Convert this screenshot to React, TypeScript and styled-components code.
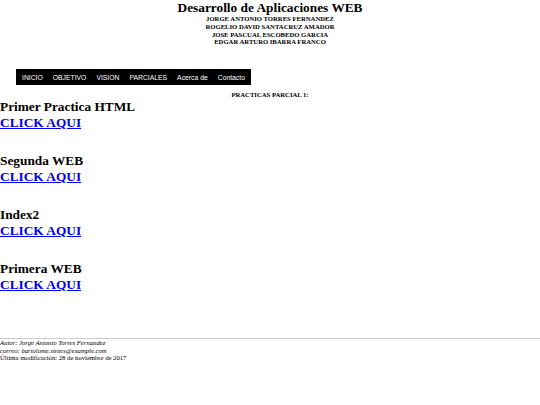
import React from 'react'
import styled, { createGlobalStyle } from 'styled-components'

const GlobalStyle = createGlobalStyle`
    html, body {
        margin: 0;
        padding: 0;
        background: #fff;
    }
    body {
        font-family: "Liberation Serif", "Times New Roman", serif;
        color: #000;
    }
`

const menu: string[] = ['INICIO', 'OBJETIVO', 'VISION', 'PARCIALES', 'Acerca de', 'Contacto']

const authors: string[] = [
    'JORGE ANTONIO TORRES FERNANDEZ',
    'ROGELIO DAVID SANTACRUZ AMADOR',
    'JOSE PASCUAL ESCOBEDO GARCIA',
    'EDGAR ARTURO IBARRA FRANCO',
]

const practices: string[] = ['Primer Practica HTML', 'Segunda WEB', 'Index2', 'Primera WEB']

export default function App() {
    return (
        <Page>
            <GlobalStyle />
            <Header>
                <Title>Desarrollo de Aplicaciones WEB</Title>
                {authors.map((name) => (
                    <Author key={name}>{name}</Author>
                ))}
            </Header>
            <Nav>
                {menu.map((item) => (
                    <NavItem key={item} href="#">
                        {item}
                    </NavItem>
                ))}
            </Nav>
            <SectionTitle>PRACTICAS PARCIAL 1:</SectionTitle>
            <List>
                {practices.map((p) => (
                    <Practice key={p}>
                        <PracticeName>{p}</PracticeName>
                        <Link href="#">CLICK AQUI</Link>
                    </Practice>
                ))}
            </List>
            <Footer>
                <Address>
                    Autor: Jorge Antonio Torres Fernandez
                    <br />
                    correo: bartolome.sintes@example.com
                </Address>
                <Updated>Última modificación: 28 de noviembre de 2017</Updated>
            </Footer>
        </Page>
    )
}

const Page = styled.div`
    width: 540px;
    min-height: 405px;
`
const Header = styled.header`
    text-align: center;
`
const Title = styled.h1`
    margin: 0;
    font-size: 13.33px;
    line-height: 15px;
    font-weight: bold;
`
const Author = styled.div`
    font-size: 6.67px;
    font-weight: bold;
    line-height: 7.8px;
`
const Nav = styled.nav`
    display: flex;
    width: fit-content;
    margin: 23px 0 0 16px;
    padding: 0 1px;
    height: 16px;
    align-items: center;
    background: #000;
`
const NavItem = styled.a`
    padding: 0 5px;
    color: #fff;
    text-decoration: none;
    font-family: "Liberation Sans", Arial, sans-serif;
    font-size: 6.8px;
`
const SectionTitle = styled.h4`
    margin: 6px 0 0;
    text-align: center;
    font-size: 6.67px;
    line-height: 8px;
    font-weight: bold;
`
const List = styled.div`
    display: flex;
    flex-direction: column;
    gap: 22px;
`
const Practice = styled.div`
    display: flex;
    flex-direction: column;
    align-items: flex-start;
`
const PracticeName = styled.h3`
    margin: 0;
    font-size: 13.33px;
    line-height: 16px;
    font-weight: bold;
`
const Link = styled.a`
    font-size: 13.33px;
    line-height: 16px;
    font-weight: bold;
    color: #0000ee;
    text-decoration: underline;
`
const Footer = styled.footer`
    margin-top: 45px;
    border-top: 1px solid #ccc;
    padding-top: 0;
    font-size: 6.67px;
    line-height: 7.4px;
`
const Address = styled.address`
    font-style: italic;
`
const Updated = styled.div``
